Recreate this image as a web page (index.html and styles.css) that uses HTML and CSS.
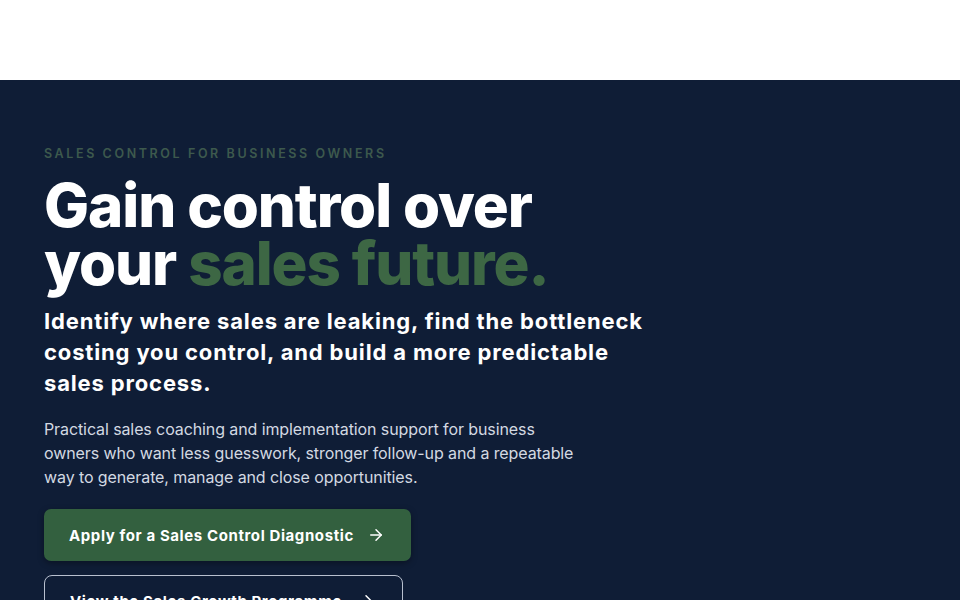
FILE: index.html
```html
<!DOCTYPE html>
<html lang="en">
<head>
<meta charset="utf-8">
<title>Sales Control</title>
<link rel="stylesheet" href="styles.css">
</head>
<body>
<header class="topbar"></header>
<main class="hero">
  <div class="hero-inner">
    <p class="eyebrow">SALES CONTROL FOR BUSINESS OWNERS</p>
    <h1 class="title">Gain control over<br>your <span class="accent">sales future.</span></h1>
    <p class="lead">Identify where sales are leaking, find the bottleneck costing you control, and build a more predictable sales process.</p>
    <p class="body">Practical sales coaching and implementation support for business owners who want less guesswork, stronger follow-up and a repeatable way to generate, manage and close opportunities.</p>
    <div class="actions">
      <a class="btn btn-primary" href="#">Apply for a Sales Control Diagnostic
        <svg class="arrow" viewBox="0 0 24 24" width="18" height="18" fill="none" stroke="currentColor" stroke-width="2" stroke-linecap="round" stroke-linejoin="round"><path d="M5 12h14"/><path d="M12 5l7 7-7 7"/></svg>
      </a>
      <a class="btn btn-outline" href="#">View the Sales Growth Programme
        <svg class="arrow" viewBox="0 0 24 24" width="18" height="18" fill="none" stroke="currentColor" stroke-width="2" stroke-linecap="round" stroke-linejoin="round"><path d="M5 12h14"/><path d="M12 5l7 7-7 7"/></svg>
      </a>
    </div>
  </div>
</main>
</body>
</html>
```

FILE: styles.css
```css
* { box-sizing: border-box; }
html, body { margin: 0; padding: 0; }
body {
  font-family: Inter, "Liberation Sans", sans-serif;
  background: #0f1d36;
  color: #fff;
  overflow: hidden;
}
.topbar {
  height: 80px;
  background: #ffffff;
}
.hero {
  background: #0f1d36;
  min-height: 520px;
}
.hero-inner {
  padding: 66px 44px 0;
  display: flex;
  flex-direction: column;
  align-items: flex-start;
}
.eyebrow {
  margin: 0;
  font-size: 12.5px;
  font-weight: 600;
  letter-spacing: 2.6px;
  color: #3d594d;
  line-height: 16px;
}
.title {
  margin: 14px 0 0;
  font-size: 60px;
  font-weight: 800;
  line-height: 58px;
  letter-spacing: -1.1px;
  color: #ffffff;
}
.accent { color: #3d6744; }
.lead {
  margin: 14px 0 0;
  font-size: 22px;
  font-weight: 700;
  line-height: 31px;
  letter-spacing: 0.85px;
  max-width: 625px;
  color: #ffffff;
}
.body {
  margin: 18px 0 0;
  font-size: 16px;
  line-height: 24px;
  letter-spacing: -0.1px;
  color: #d3d9e2;
  max-width: 540px;
}
.actions {
  margin-top: 20px;
  display: flex;
  flex-direction: column;
  align-items: flex-start;
  gap: 14px;
}
.btn {
  display: inline-flex;
  align-items: center;
  gap: 13px;
  height: 52px;
  padding: 0 26px 0 25px;
  font-size: 15px;
  font-weight: 700;
  letter-spacing: 0.6px;
  color: #ffffff;
  text-decoration: none;
  border-radius: 7px;
}
.btn-primary {
  background: #33603f;
  box-shadow: 0 2px 6px rgba(0,0,0,0.35);
}
.btn-outline {
  border: 1px solid #b8c0cf;
  border-radius: 8px;
  gap: 15px;
  padding-right: 27px;
}
.arrow { flex: none; }
```
